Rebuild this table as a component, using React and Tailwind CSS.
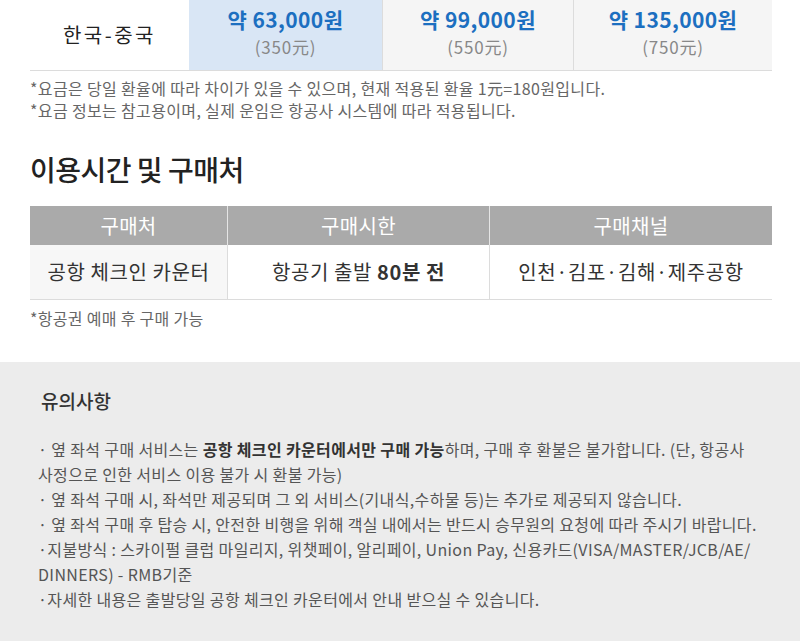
import React from 'react';

const prices = [
  { krw: '약 63,000원', cny: '(350元)', active: true },
  { krw: '약 99,000원', cny: '(550元)' },
  { krw: '약 135,000원', cny: '(750元)' },
];

const notices = [
  <>
    · 옆 좌석 구매 서비스는 <b className="font-bold text-[#333]">공항 체크인 카운터에서만 구매 가능</b>하며, 구매 후 환불은 불가합니다. (단, 항공사
    사정으로 인한 서비스 이용 불가 시 환불 가능)
  </>,
  <>· 옆 좌석 구매 시, 좌석만 제공되며 그 외 서비스(기내식,수하물 등)는 추가로 제공되지 않습니다.</>,
  <>· 옆 좌석 구매 후 탑승 시, 안전한 비행을 위해 객실 내에서는 반드시 승무원의 요청에 따라 주시기 바랍니다.</>,
  <>·지불방식 : 스카이펄 클럽 마일리지, 위챗페이, 알리페이, Union Pay, 신용카드(VISA/MASTER/JCB/AE/ DINNERS) - RMB기준</>,
  <>·자세한 내용은 출발당일 공항 체크인 카운터에서 안내 받으실 수 있습니다.</>,
];

const App = () => {
  return (
    <div className="w-[800px] h-[641px] overflow-hidden bg-white font-['Noto_Sans_CJK_KR','Noto_Sans',sans-serif]">
      <div className="ml-[30px] w-[742px]">
        {/* Fare table */}
        <div className="flex h-[71px] border-b border-[#dcdcdc]">
          <div className="w-[159px] flex items-center justify-center text-[20px] text-[#222] tracking-[2.5px] pb-[1px]">
            한국-중국
          </div>
          {prices.map((p, i) => (
            <div
              key={i}
              className={`flex flex-col items-center pt-[4px] ${
                p.active ? 'w-[193px] bg-[#d9e6f5]' : 'bg-[#f5f5f5] border-l border-[#dcdcdc]'
              } ${i === 1 ? 'w-[191px]' : ''} ${i === 2 ? 'w-[199px]' : ''}`}
            >
              <span className="text-[21px] leading-[30px] font-bold text-[#1c6fc0] tracking-[0.4px]">{p.krw}</span>
              <span className="text-[17px] leading-[26px] text-[#888] tracking-[0.8px]">{p.cny}</span>
            </div>
          ))}
        </div>
        <div className="pt-[6px] text-[16px] leading-[22px] text-[#666] tracking-[0.35px]">
          <p>*요금은 당일 환율에 따라 차이가 있을 수 있으며, 현재 적용된 환율 1元=180원입니다.</p>
          <p>*요금 정보는 참고용이며, 실제 운임은 항공사 시스템에 따라 적용됩니다.</p>
        </div>

        {/* Purchase info */}
        <h2 className="mt-[28px] text-[28px] leading-[40px] font-medium text-[#222] tracking-[-0.5px]">이용시간 및 구매처</h2>
        <div className="mt-[17px]">
          <div className="flex h-[39px] bg-[#aaaaaa] text-white text-[20px] tracking-[0.3px]">
            <div className="w-[197px] flex items-center justify-center">구매처</div>
            <div className="w-[262px] flex items-center justify-center border-l border-[#e5e5e5]">구매시한</div>
            <div className="flex-1 flex items-center justify-center border-l border-[#e5e5e5]">구매채널</div>
          </div>
          <div className="flex h-[55px] border-b border-[#dcdcdc] text-[20px] text-[#333] tracking-[0.6px]">
            <div className="w-[197px] flex items-center justify-center bg-[#f7f7f7]">공항 체크인 카운터</div>
            <div className="w-[262px] flex items-center justify-center border-l border-[#dcdcdc]">
              항공기 출발&nbsp;<b className="font-bold">80분 전</b>
            </div>
            <div className="flex-1 flex items-center justify-center border-l border-[#dcdcdc]">인천·김포·김해·제주공항</div>
          </div>
        </div>
        <p className="pt-[7px] text-[16px] leading-[22px] text-[#666] tracking-[0.3px]">*항공권 예매 후 구매 가능</p>
      </div>

      {/* Notices */}
      <div className="mt-[33px] bg-[#ececec] h-[300px] pl-[38px] pr-[34px] pt-[25px]">
        <h3 className="pl-[3px] text-[19px] leading-[28px] font-medium text-[#333]">유의사항</h3>
        <ul className="mt-[22px] text-[16px] leading-[25px] text-[#555] tracking-[0.35px] break-keep">
          {notices.map((n, i) => (
            <li key={i}>{n}</li>
          ))}
        </ul>
      </div>
    </div>
  );
};

export default App;
